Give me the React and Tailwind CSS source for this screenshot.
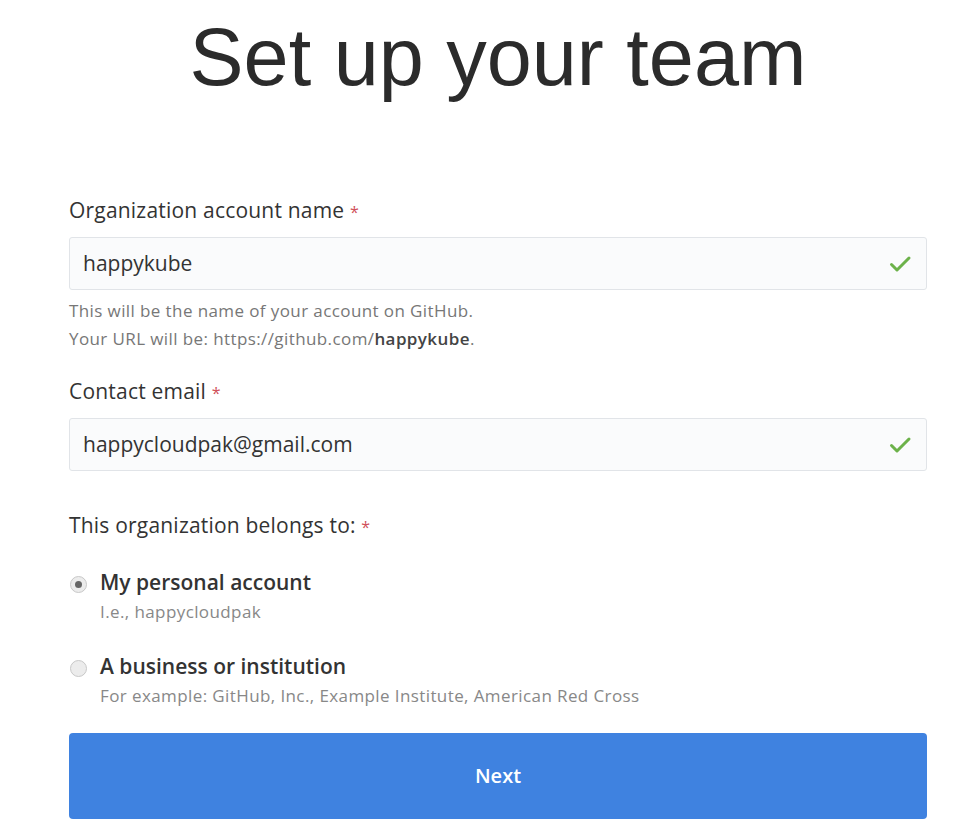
import { useState } from "react";

function Check() {
  return (
    <svg width="24" height="24" viewBox="0 0 24 24" fill="none" className="shrink-0">
      <path d="M3.5 12.5l5.5 5.5L21 6" stroke="#6cb24a" strokeWidth="3" strokeLinecap="round" strokeLinejoin="round" />
    </svg>
  );
}

function Field({ label, value, children }) {
  return (
    <div className="flex flex-col">
      <label className="text-[21px] leading-[28px] tracking-[0.2px] text-[#333]">
        {label} <span className="text-[#d0505a] text-[16px]">*</span>
      </label>
      <div className="mt-[11px] h-[53px] flex items-center justify-between rounded-[3px] border border-[#e1e4e8] bg-[#fafbfc] pl-[13px] pr-[14px]">
        <span className="text-[21px] text-[#333]">{value}</span>
        <Check />
      </div>
      {children}
    </div>
  );
}

function Radio({ checked, title, note, onClick }) {
  return (
    <div className="flex items-start gap-[13px] pl-[1px] cursor-pointer" onClick={onClick}>
      <span className="mt-[10px] w-[17px] h-[17px] rounded-full border border-[#c8c8c8] bg-[#ececec] flex items-center justify-center">
        {checked && <span className="w-[7px] h-[7px] rounded-full bg-[#666]" />}
      </span>
      <div className="flex flex-col">
        <span className="text-[21px] leading-[32px] font-semibold text-[#333]">{title}</span>
        <span className="mt-[3px] text-[17px] leading-[22px] tracking-[0.4px] text-[#888]">{note}</span>
      </div>
    </div>
  );
}

export default function App() {
  const [owner, setOwner] = useState("personal");

  return (
    <div className="min-h-screen bg-white" style={{ fontFamily: '"Open Sans", "Noto Sans", sans-serif' }}>
      <div className="pl-[69px] pr-[43px] pt-[12px]">
        <h1
          className="text-center text-[81px] leading-[90px] text-[#2b2b2b]"
          style={{ fontFamily: '"Liberation Sans", Arial, sans-serif' }}
        >
          Set up your team
        </h1>

        <div className="mt-[94px] flex flex-col">
          <Field label="Organization account name" value="happykube">
            <p className="mt-[7px] text-[17px] leading-[28px] tracking-[0.4px] text-[#777]">
              This will be the name of your account on GitHub.
              <br />
              Your URL will be: https://github.com/<span className="font-semibold text-[#444]">happykube</span>.
            </p>
          </Field>

          <div className="mt-[24px]">
            <Field label="Contact email" value="happycloudpak@gmail.com" />
          </div>

          <div className="mt-[40px] text-[21px] leading-[28px] tracking-[0.2px] text-[#333]">
            This organization belongs to: <span className="text-[#d0505a] text-[16px]">*</span>
          </div>

          <div className="mt-[25px] flex flex-col gap-[27px]">
            <Radio
              checked={owner === "personal"}
              title="My personal account"
              note="I.e., happycloudpak"
              onClick={() => setOwner("personal")}
            />
            <Radio
              checked={owner === "business"}
              title="A business or institution"
              note="For example: GitHub, Inc., Example Institute, American Red Cross"
              onClick={() => setOwner("business")}
            />
          </div>

          <button className="mt-[26px] h-[86px] w-full rounded-[4px] bg-[#3f82e0] text-white text-[20px] font-semibold">
            Next
          </button>
        </div>
      </div>
    </div>
  );
}
